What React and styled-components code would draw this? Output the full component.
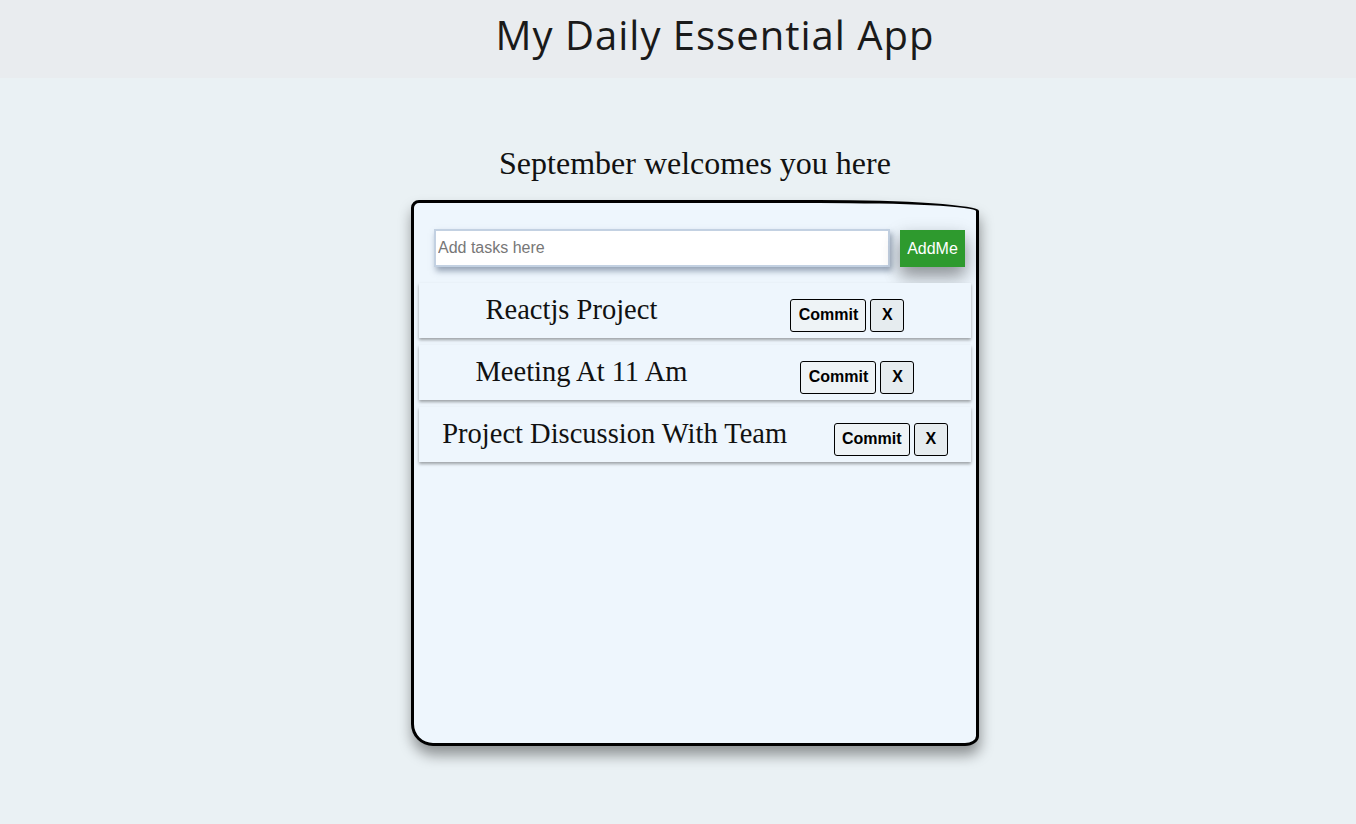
import React from "react";
import styled, { createGlobalStyle } from "styled-components";

const Global = createGlobalStyle`
  * { box-sizing: border-box; }
  html, body { margin: 0; padding: 0; }
  body { background: #eaf1f4; font-family: "Liberation Sans", Arial, sans-serif; }
`;

const Page = styled.div`
  min-height: 824px;
  display: flex;
  flex-direction: column;
  align-items: center;
`;

const Header = styled.header`
  width: 100%;
  height: 78px;
  background: #e9ecef;
  display: flex;
  justify-content: center;
  align-items: center;
  padding-left: 74px;
`;

const Title = styled.h1`
  margin: 0;
  font-family: "Open Sans", sans-serif;
  font-weight: 400;
  font-size: 40px;
  letter-spacing: 1px;
  color: #1a1a1a;
  transform: translateY(-5px);
`;

const Main = styled.main`
  width: 100%;
  padding-left: 34px;
  display: flex;
  flex-direction: column;
  align-items: center;
`;

const Subtitle = styled.h2`
  margin: 67px 0 0;
  font-family: "Liberation Serif", serif;
  font-weight: 400;
  font-size: 32px;
  line-height: 36px;
  color: #111;
`;

const Card = styled.div`
  margin-top: 19px;
  width: 568px;
  height: 546px;
  background: #eef6fd;
  border: 3px solid #000;
  border-radius: 8px 160px 14px 22px / 8px 11px 10px 22px;
  box-shadow: 1px 9px 14px rgba(0, 0, 0, 0.4);
  padding: 26px 5px 0 5px;
  display: flex;
  flex-direction: column;
`;

const Form = styled.form`
  display: flex;
  align-items: flex-start;
  gap: 10px;
  padding-left: 15px;
  margin-bottom: 16px;
`;

const Input = styled.input`
  width: 456px;
  height: 38px;
  border: 2px solid #c3d1e2;
  background: #fff;
  font-family: "Liberation Sans", Arial, sans-serif;
  font-size: 16px;
  padding: 0 2px;
  box-shadow: 2px 4px 6px rgba(60, 80, 110, 0.5);
  outline: none;
  &::placeholder { color: #777; }
`;

const AddButton = styled.button`
  width: 65px;
  height: 37px;
  margin-top: 1px;
  border: none;
  background: #2e9a2e;
  color: #fff;
  font-family: "Liberation Sans", Arial, sans-serif;
  font-size: 16px;
  padding: 0;
  box-shadow: 0 10px 16px rgba(0, 0, 0, 0.28), 0 6px 20px rgba(0, 0, 0, 0.19);
`;

const List = styled.div`
  display: flex;
  flex-direction: column;
  gap: 7px;
`;

const Row = styled.div`
  height: 55px;
  background: #eef6fd;
  box-shadow: 0 2px 3px rgba(0, 0, 0, 0.35);
  display: flex;
  justify-content: space-around;
  align-items: center;
`;

const TaskText = styled.span`
  font-family: "Liberation Serif", serif;
  font-size: 28.5px;
  color: #111;
  margin-top: -1px;
`;

const Actions = styled.div`
  display: flex;
  gap: 4px;
  margin-top: 9px;
`;

const ActionButton = styled.button`
  height: 33px;
  padding: 0 6px;
  min-width: ${(p) => (p.$small ? "34px" : "76px")};
  border: 1px solid #000;
  border-radius: 3px;
  background: ${(p) => (p.$small ? "#e6ecef" : "#eef3f6")};
  font-family: "Liberation Sans", Arial, sans-serif;
  font-weight: 700;
  font-size: 16px;
  color: #000;
`;

const tasks = ["Reactjs Project", "Meeting At 11 Am", "Project Discussion With Team"];

export default function App() {
  return (
    <>
      <Global />
      <Page>
        <Header>
          <Title>My Daily Essential App</Title>
        </Header>
        <Main>
          <Subtitle>September welcomes you here</Subtitle>
          <Card>
            <Form onSubmit={(e) => e.preventDefault()}>
              <Input placeholder="Add tasks here" />
              <AddButton type="submit">AddMe</AddButton>
            </Form>
            <List>
              {tasks.map((t) => (
                <Row key={t}>
                  <TaskText>{t}</TaskText>
                  <Actions>
                    <ActionButton>Commit</ActionButton>
                    <ActionButton $small>X</ActionButton>
                  </Actions>
                </Row>
              ))}
            </List>
          </Card>
        </Main>
      </Page>
    </>
  );
}
